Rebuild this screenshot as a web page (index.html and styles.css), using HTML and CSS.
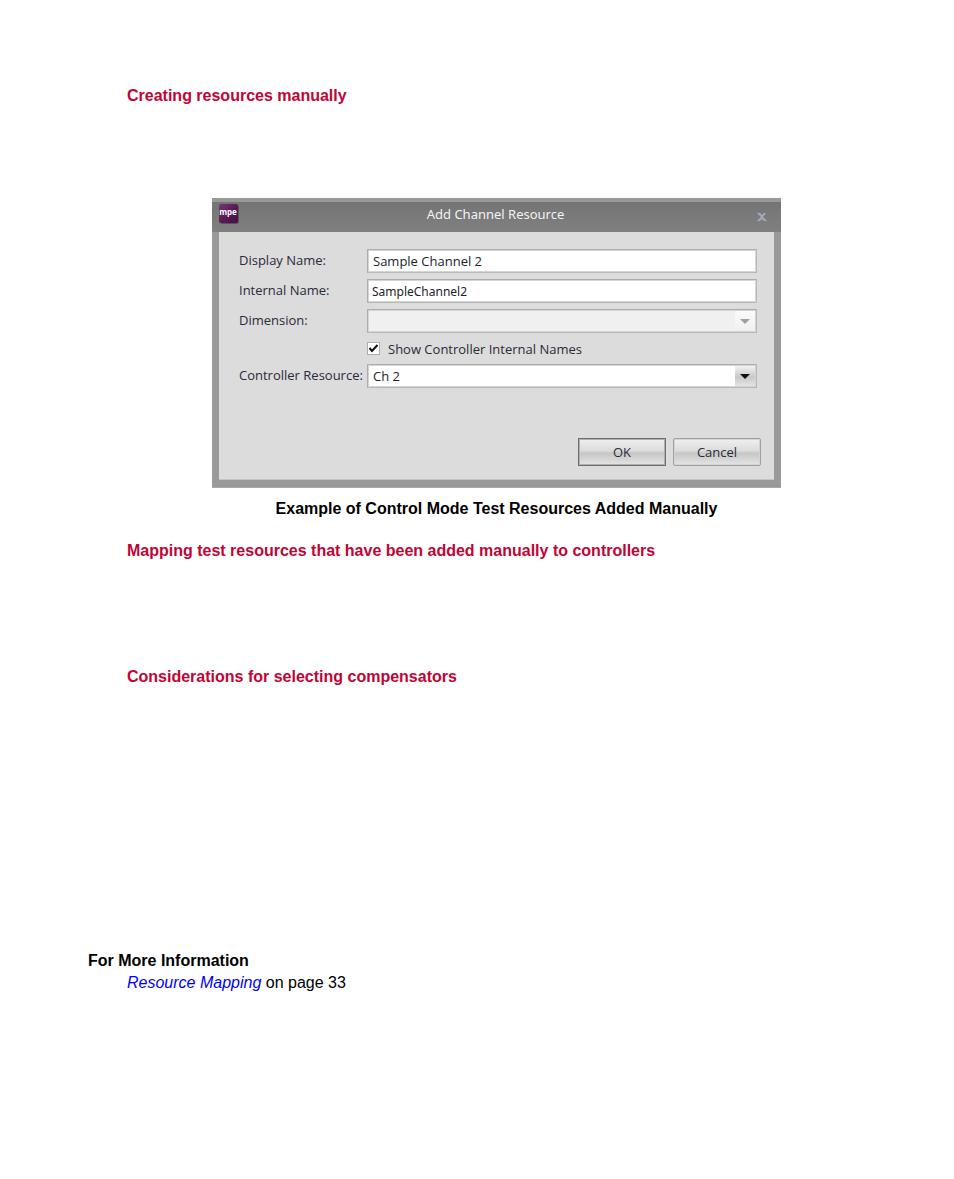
FILE: index.html
```html
<!DOCTYPE html>
<html lang="en">
<head>
<meta charset="utf-8">
<title>Resource Mapping</title>
<link rel="stylesheet" href="styles.css">
</head>
<body>
<main class="page">
  <section class="topic topic-create">
    <h2 class="topic-title">Creating resources manually</h2>
    <figure class="figure">
      <form class="dialog">
        <header class="titlebar">
          <svg class="logo" viewBox="0 0 20 20" role="img" aria-label="mpe">
            <defs>
              <linearGradient id="plum" x1="0" y1="0" x2="1" y2="1">
                <stop offset="0" stop-color="#743a70"/>
                <stop offset=".5" stop-color="#5d195b"/>
                <stop offset="1" stop-color="#3f103f"/>
              </linearGradient>
            </defs>
            <rect x="1" y="1" width="19" height="19" rx="3" fill="#555"/>
            <rect width="19" height="19" rx="2" fill="url(#plum)"/>
            <text class="logo-text" x="9" y="11" text-anchor="middle">mpe</text>
          </svg>
          <span class="dialog-title">Add Channel Resource</span>
          <button class="close" type="button" aria-label="Close">
            <svg class="close-icon" viewBox="0 0 10 10"><path d="M0 1h3l2 2 2-2h2L6 5l4 4H7L5 7 3 9H0l4-4z" fill="#a3adba"/></svg>
          </button>
        </header>
        <div class="dialog-body">
          <div class="fields">
            <label class="label" for="display">Display Name:</label>
            <input class="box" id="display" type="text" value="Sample Channel 2">
            <label class="label" for="internal">Internal Name:</label>
            <input class="box tight" id="internal" type="text" value="SampleChannel2">
            <label class="label" for="dimension">Dimension:</label>
            <div class="combo">
              <select class="box" id="dimension" disabled><option></option></select>
              <svg class="arrow arrow-off" viewBox="0 0 20 20"><path d="M5 8h10l-5 5z"/></svg>
            </div>
            <label class="check"><input class="tick" type="checkbox" checked>Show Controller Internal Names</label>
            <label class="label" for="controller">Controller Resource:</label>
            <div class="combo">
              <select class="box" id="controller"><option>Ch 2</option></select>
              <svg class="arrow" viewBox="0 0 20 20"><path d="M5 8h10l-5 5z"/></svg>
            </div>
          </div>
          <div class="actions">
            <button class="btn btn-default" type="button">OK</button>
            <button class="btn" type="button">Cancel</button>
          </div>
        </div>
      </form>
      <figcaption class="caption">Example of Control Mode Test Resources Added Manually</figcaption>
    </figure>
  </section>
  <section class="topic topic-mapping">
    <h2 class="topic-title">Mapping test resources that have been added manually to controllers</h2>
  </section>
  <section class="topic topic-compensators">
    <h2 class="topic-title">Considerations for selecting compensators</h2>
  </section>
  <section class="more">
    <h2 class="more-title">For More Information</h2>
    <p class="more-link"><a class="xref" href="#resource-mapping">Resource Mapping</a> on page 33</p>
  </section>
</main>
</body>
</html>
```

FILE: styles.css
```css
* { box-sizing: border-box; }

body {
  margin: 0;
  background: #fff;
  color: #000;
  font: 16px/22px "Liberation Sans", Arial, sans-serif;
}

h2, p, figure { margin: 0; font-size: inherit; }

.page { padding: 85px 88px 40px; }

.topic { padding-left: 39px; }
.topic-create { padding-bottom: 20px; }
.topic-mapping { padding-bottom: 104px; }
.topic-compensators { padding-bottom: 262px; }
.topic-title { color: #c10435; }

.figure {
  display: flex;
  flex-direction: column;
  align-items: center;
  padding-top: 91px;
}
.caption { margin-top: 10px; font-weight: bold; }

.dialog {
  width: 100%;
  max-width: 569px;
  background: #999;
  border-bottom: 1px solid #a8a8a8;
  color: #2a2a3a;
  font: 13px/18px "Open Sans", Tahoma, sans-serif;
}

.titlebar {
  display: grid;
  grid-template-columns: 20px 1fr 20px;
  align-items: center;
  height: 34px;
  padding: 0 9px 6px 7px;
  border-top: 4px solid #999;
  background: linear-gradient(#747474, #808080);
}
.logo { width: 20px; height: 20px; }
.logo-text { fill: #fff; font: bold 8px "Open Sans", sans-serif; }
.dialog-title {
  color: #f2f2f2;
  font-family: "Noto Sans", Tahoma, sans-serif;
  text-align: center;
}
.close {
  display: flex;
  justify-content: center;
  padding: 5px 0 0;
  border: 0;
  background: none;
}
.close-icon { width: 10px; height: 10px; }

.dialog-body {
  margin: 0 7px 7px;
  padding: 17px 13px 13px 20px;
  background: #dcdcdc;
  border-bottom: 1px solid #c4c4c4;
}

.fields {
  display: grid;
  grid-template-columns: 128px 1fr;
  row-gap: 6px;
  padding-right: 4px;
}
.label { line-height: 22px; white-space: nowrap; }

.box {
  width: 100%;
  height: 24px;
  padding: 0 5px;
  border: 1px solid #b8b8b8;
  border-top-color: #adadad;
  border-left-color: #adadad;
  outline: 0;
  box-shadow: inset 0 0 0 1px #d4d4d4;
  border-radius: 0;
  background: #fff;
  color: #22222e;
  font: inherit;
  appearance: none;
}
.box:disabled { background: #f0f0f0; opacity: 1; }
.tight {
  padding-left: 4px;
  font-family: "Noto Sans", Tahoma, sans-serif;
  font-size: 12px;
}

.combo { display: grid; }
.combo > * { grid-area: 1 / 1; }
.arrow {
  justify-self: end;
  align-self: center;
  width: 20px;
  height: 20px;
  margin-right: 2px;
  background: linear-gradient(#f2f2f2, #c8c8c8 55%, #e4e4e4);
  fill: #111;
  pointer-events: none;
}
.arrow-off { background: linear-gradient(#fafafa, #f0f0f0); fill: #a0a0a0; }

.check {
  grid-column: 2;
  display: flex;
  align-items: center;
  gap: 8px;
  height: 19px;
}
.tick {
  width: 13px;
  height: 13px;
  margin: 0;
  border: 1px solid #adadad;
  background: #fff;
  appearance: none;
}
.tick:checked {
  background: #fff url("data:image/svg+xml,%3Csvg xmlns='http://www.w3.org/2000/svg' viewBox='0 0 11 11'%3E%3Cpath d='M1.5 5l2.5 3 5.5-6' fill='none' stroke='%23111' stroke-width='2'/%3E%3C/svg%3E");
}

.actions {
  display: flex;
  justify-content: flex-end;
  gap: 7px;
  margin-top: 50px;
}
.btn {
  width: 88px;
  height: 28px;
  padding: 0 0 1px;
  border: 1px solid #a0a0a0;
  border-radius: 2px;
  background: linear-gradient(#f0f0f0, #dcdcdc 45%, #c6c6c6 55%, #e4e4e4);
  box-shadow: inset 0 0 0 1px #d4d4d4;
  color: inherit;
  font: inherit;
}
.btn-default { border-color: #6e6e6e; border-radius: 0; box-shadow: inset 0 0 0 1px #b0b0b0; }

.more-link { padding-left: 39px; }
.xref { color: #00f; font-style: italic; text-decoration: none; }
```
